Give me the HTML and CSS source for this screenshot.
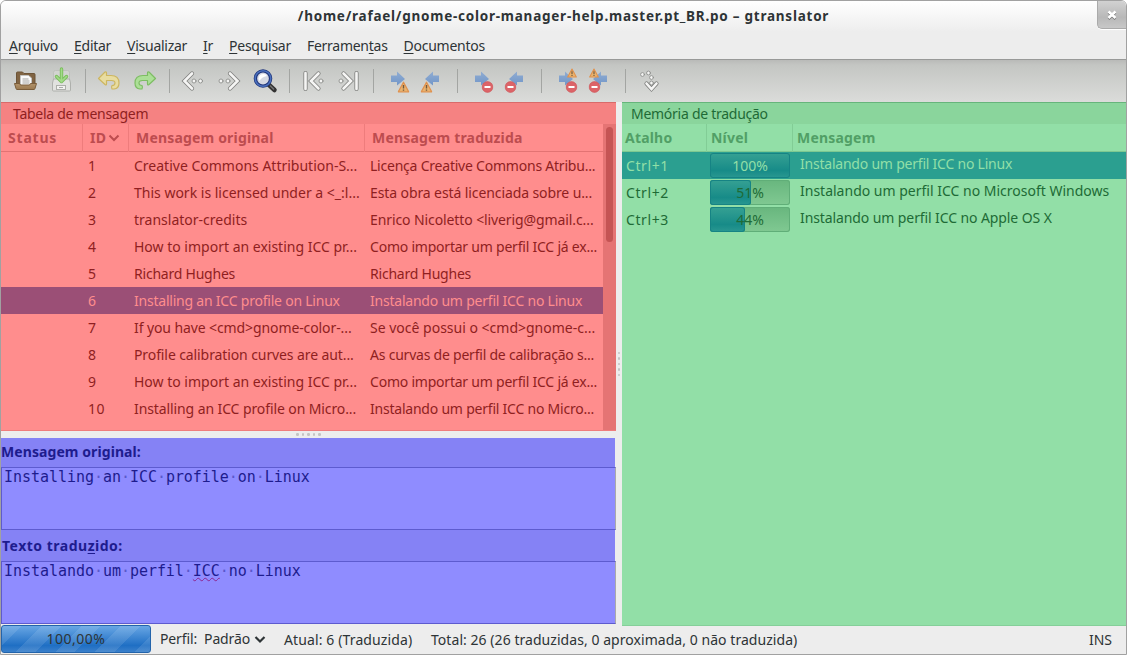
FILE: index.html
```html
<!DOCTYPE html>
<html lang="pt-BR">
<head>
<meta charset="utf-8">
<title>gtranslator</title>
<link rel="stylesheet" href="styles.css">
</head>
<body>
<svg class="defs" aria-hidden="true">
  <defs>
    <linearGradient id="blue" x1="0" y1="0" x2="0" y2="1"><stop offset="0" stop-color="#90acd2"/><stop offset="1" stop-color="#7196c8"/></linearGradient>
    <linearGradient id="wood" x1="0" y1="0" x2="0" y2="1"><stop offset="0" stop-color="#b2936a"/><stop offset="1" stop-color="#9a7950"/></linearGradient>
    <symbol id="arrow-r" viewBox="0 0 24 24"><path d="M3 6.500h6V2.500l8 7.500-8 6.500v-3.500H3z" fill="url(#blue)"/></symbol>
    <symbol id="arrow-l" viewBox="0 0 24 24"><path d="M21 6.500h-6V2.500l-8 7.500 8 6.500v-3.500h6z" fill="url(#blue)"/></symbol>
    <symbol id="warn" viewBox="0 0 12 12"><path d="M6 1.200L11.200 10.800H.8z" fill="#e9b36e" stroke="#e0914d" stroke-width="1.300" stroke-linejoin="round"/><path d="M6 4v3.500M6 8.500v1.200" stroke="#71583e" stroke-width="1.400"/></symbol>
    <symbol id="stop" viewBox="0 0 12 12"><circle cx="6" cy="6" r="5.400" fill="#dc6468" stroke="#cf5054" stroke-width=".6"/><path d="M3 6h6" stroke="#fff" stroke-width="2"/></symbol>
  </defs>
</svg>
<div class="window">
  <header class="titlebar">
    <h1>/home/rafael/gnome-color-manager-help.master.pt_BR.po – gtranslator</h1>
    <button class="close" aria-label="Fechar"><svg width="10" height="10" viewBox="0 0 10 10"><path d="M1.500 2.500l7 6.500M8.500 2.500l-7 6.500" stroke="#777" stroke-width="2.400"/><path d="M1.500 1.500l7 6.500M8.500 1.500l-7 6.500" stroke="#fff" stroke-width="2.500"/></svg></button>
  </header>
  <nav class="menubar">
    <span><u>A</u>rquivo</span><span><u>E</u>ditar</span><span><u>V</u>isualizar</span><span><u>I</u>r</span><span><u>P</u>esquisar</span><span>Ferramen<u>t</u>as</span><span><u>D</u>ocumentos</span>
  </nav>
  <div class="toolbar">
    <div class="group">
      <svg class="icon" viewBox="0 0 24 24"><path d="M3.500 15V4q0-1 1-1h5l1.500 1.500h10q1 0 1 1V15z" fill="#806443" stroke="#6c5437"/><path d="M7.500 16.500V6.500h8l3 2.500v7.500z" fill="#fafafa" stroke="#c4c4c2"/><path d="M9.500 10h6M9.500 12h7M9.500 14h7" stroke="#a5a5a3"/><path d="M1.500 14.500h5l1 1.500h9l1-1.500h6l-1.500 5q-.3 1-1 1H4q-.8 0-1-1z" fill="url(#wood)" stroke="#7a5d3a"/></svg>
      <svg class="icon" viewBox="0 0 24 24"><path d="M4.500 3.500q0-2 2-2h12q2 0 2 2v8H4.500z" fill="#d2d4d0" stroke="#bfc1bd"/><path d="M3.500 14l1-4h16l1 4v7q0 1-1 1h-16q-1 0-1-1z" fill="#e1e2df" stroke="#aeb0ac"/><rect x="7.500" y="16.500" width="9" height="4" fill="#f2f2f0" stroke="#adafab"/><path d="M10 18.500h4" stroke="#aaa"/><path d="M12.500 0v12M7.500 7.500l5 5 5-5" fill="none" stroke="#78bd5a" stroke-width="3.400" stroke-linecap="round" stroke-linejoin="round"/><path d="M12.500 0v11.500M7.500 7.500l5 5 5-5" fill="none" stroke="#a2db88" stroke-width="1.600" stroke-linecap="round"/></svg>
    </div>
    <div class="group">
      <svg class="icon" viewBox="0 0 24 24"><path d="M1.500 9.500L8 3q1.500-.5 1.500 1v2.500H14q8 0 8 7.500 0 5.500-5 6h-2q-1-1.700 0-3.500 3 0 3-2.500t-3.500-2.500H9.500V15q0 1.500-1.500.5z" fill="#e8dca0" stroke="#cdb660" stroke-width="1.200" stroke-linejoin="round"/></svg>
      <svg class="icon" viewBox="0 0 24 24"><path d="M22.500 9.500L16 3q-1.500-.5-1.500 1v2.500H10q-8 0-8 7.500 0 5.500 5 6h2q1-1.700 0-3.500-3 0-3-2.500t3.500-2.500h5V15q0 1.500 1.500.5z" fill="#acdf97" stroke="#7dbd63" stroke-width="1.200" stroke-linejoin="round"/></svg>
    </div>
    <div class="group">
      <svg class="icon" viewBox="0 0 24 24"><g class="nav"><path class="o" d="M11 4.500L3.500 12l7.500 7.500"/><path class="i" d="M11 4.500L3.500 12l7.500 7.500"/><circle cx="13" cy="12" r="2"/><circle cx="19.500" cy="12" r="2"/></g></svg>
      <svg class="icon" viewBox="0 0 24 24"><g class="nav"><path class="o" d="M13 4.500L20.500 12 13 19.500"/><path class="i" d="M13 4.500L20.500 12 13 19.500"/><circle cx="4" cy="12" r="2"/><circle cx="11" cy="12" r="2"/></g></svg>
      <svg class="icon" viewBox="0 0 24 24"><path d="M15 15l6.500 6" stroke="#333" stroke-width="4.500" stroke-linecap="round"/><path d="M17 16.500l4 4" stroke="#777" stroke-width="1.200"/><circle cx="10" cy="9.500" r="7.600" fill="#d5d9e3" stroke="#21367c" stroke-width="3.400"/><circle cx="10" cy="9.500" r="7.800" fill="none" stroke="#4a70bd" stroke-width="1.500"/><path d="M5.500 10q0-5 5-5 3 0 3.500 2-5.500 1-7.500 5z" fill="#fff"/></svg>
    </div>
    <div class="group">
      <svg class="icon" viewBox="0 0 24 24"><g class="nav"><path class="o" d="M4.500 4v16M17.500 4.500L10 12l7.500 7.500"/><path class="i" d="M4.500 4v16M17.500 4.500L10 12l7.500 7.500"/><circle cx="20" cy="12" r="2"/></g></svg>
      <svg class="icon" viewBox="0 0 24 24"><g class="nav"><path class="o" d="M19.500 4v16M6.500 4.500L14 12l-7.500 7.500"/><path class="i" d="M19.500 4v16M6.500 4.500L14 12l-7.500 7.500"/><circle cx="4" cy="12" r="2"/></g></svg>
    </div>
    <div class="group tight">
      <svg class="icon" viewBox="0 0 24 24"><use href="#arrow-r"/><use href="#warn" x="9.500" y="12" width="12" height="12"/></svg>
      <svg class="icon" viewBox="0 0 24 24"><use href="#arrow-l"/><use href="#warn" x="2.500" y="12" width="12" height="12"/></svg>
    </div>
    <div class="group tight">
      <svg class="icon" viewBox="0 0 24 24"><use href="#arrow-r"/><use href="#stop" x="9.500" y="12" width="12" height="12"/></svg>
      <svg class="icon" viewBox="0 0 24 24"><use href="#arrow-l"/><use href="#stop" x="2.500" y="12" width="12" height="12"/></svg>
    </div>
    <div class="group tight">
      <svg class="icon" viewBox="0 0 24 24"><use href="#arrow-r"/><use href="#warn" x="11" y="-1" width="10" height="10"/><use href="#stop" x="9.500" y="12" width="12" height="12"/></svg>
      <svg class="icon" viewBox="0 0 24 24"><use href="#arrow-l"/><use href="#warn" x="3" y="-1" width="10" height="10"/><use href="#stop" x="2.500" y="12" width="12" height="12"/></svg>
    </div>
    <div class="group">
      <svg class="icon" viewBox="0 0 24 24"><g class="nav"><path class="o" d="M9.500 14.500l5 5.500 5-5.500"/><path class="i" d="M9.500 14.500l5 5.500 5-5.500"/><circle cx="5.500" cy="5.500" r="1.900"/><circle cx="11.500" cy="4" r="1.900"/><circle cx="14.500" cy="8.500" r="1.900"/><circle cx="14.500" cy="14" r="1.900"/></g></svg>
    </div>
  </div>
  <main class="panes">
    <div class="left">
      <section class="table">
        <h2>Tabela de mensagem</h2>
        <div class="body">
          <div class="grid">
            <div class="row head"><span class="status">Status</span><span>ID <svg width="12" height="8" viewBox="0 0 12 8"><path d="M1.500 1.500L6 6l4.500-4.500" fill="none" stroke="#bd4c4f" stroke-width="2"/></svg></span><span>Mensagem original</span><span>Mensagem traduzida</span></div>
            <div class="row"><span></span><span>1</span><span>Creative Commons Attribution-S...</span><span class="narrow">Licença Creative Commons Atribu...</span></div>
            <div class="row"><span></span><span>2</span><span>This work is licensed under a &lt;_:l...</span><span class="snug">Esta obra está licenciada sobre u...</span></div>
            <div class="row"><span></span><span>3</span><span>translator-credits</span><span class="snug">Enrico Nicoletto &lt;liverig@gmail.c...</span></div>
            <div class="row"><span></span><span>4</span><span>How to import an existing ICC pr...</span><span class="narrow">Como importar um perfil ICC já ex...</span></div>
            <div class="row"><span></span><span>5</span><span class="narrow">Richard Hughes</span><span class="narrow">Richard Hughes</span></div>
            <div class="row selected"><span></span><span>6</span><span class="narrow">Installing an ICC profile on Linux</span><span class="narrow">Instalando um perfil ICC no Linux</span></div>
            <div class="row"><span></span><span>7</span><span class="snug">If you have &lt;cmd&gt;gnome-color-...</span><span>Se você possui o &lt;cmd&gt;gnome-c...</span></div>
            <div class="row"><span></span><span>8</span><span class="snug">Profile calibration curves are aut...</span><span class="narrow">As curvas de perfil de calibração s...</span></div>
            <div class="row"><span></span><span>9</span><span>How to import an existing ICC pr...</span><span class="narrow">Como importar um perfil ICC já ex...</span></div>
            <div class="row"><span></span><span class="wide">10</span><span class="snug">Installing an ICC profile on Micro...</span><span class="narrow">Instalando um perfil ICC no Micro...</span></div>
          </div>
          <div class="scrollbar"><div class="thumb"></div></div>
        </div>
      </section>
      <div class="handle"><i></i><i></i><i></i><i></i><i></i></div>
      <section class="editor">
        <h3>Mensagem original:</h3>
        <div class="entry">Installing<b>·</b>an<b>·</b>ICC<b>·</b>profile<b>·</b>on<b>·</b>Linux</div>
        <h3 class="second">Texto tradu<u>z</u>ido:</h3>
        <div class="entry">Instalando<b>·</b>um<b>·</b>perfil<b>·</b><span class="misspelt">ICC</span><b>·</b>no<b>·</b>Linux</div>
      </section>
    </div>
    <div class="handle vertical"><i></i><i></i><i></i><i></i><i></i></div>
    <section class="memory">
      <h2>Memória de tradução</h2>
      <div class="row head"><span>Atalho</span><span>Nível</span><span>Mensagem</span></div>
      <div class="row selected"><span class="wide">Ctrl+1</span><div class="meter"><div class="fill" style="width:100%"></div><em>100%</em></div><span class="narrow">Instalando um perfil ICC no Linux</span></div>
      <div class="row"><span class="wide">Ctrl+2</span><div class="meter"><div class="fill" style="width:51%"></div><em>51%</em></div><span>Instalando um perfil ICC no Microsoft Windows</span></div>
      <div class="row"><span class="wide">Ctrl+3</span><div class="meter"><div class="fill" style="width:44%"></div><em>44%</em></div><span class="snug">Instalando um perfil ICC no Apple OS X</span></div>
    </section>
  </main>
  <footer class="statusbar">
    <div class="progress">100,00%</div>
    <span class="profile">Perfil:&nbsp; Padrão <svg width="12" height="8" viewBox="0 0 12 8"><path d="M1.500 1L6 5.500 10.500 1" fill="none" stroke="#2e3436" stroke-width="2.200"/></svg></span>
    <span class="current">Atual: 6 (Traduzida)</span>
    <span class="total">Total: 26 (26 traduzidas, 0 aproximada, 0 não traduzida)</span>
    <span class="ins">INS</span>
  </footer>
</div>
</body>
</html>
```
FILE: styles.css
```css
* { box-sizing: border-box; }
body { margin: 0; background: #fff; }
.defs { position: absolute; width: 0; height: 0; }
h1, h2, h3 { margin: 0; font-weight: normal; }

.window {
  width: 1127px;
  height: 655px;
  border: 1px solid #a1a1a1;
  border-radius: 6px 6px 0 0;
  background: #ededed;
  color: #2e3436;
  font: 14px/20px "Noto Sans", "Open Sans", sans-serif;
  overflow: hidden;
  display: flex;
  flex-direction: column;
  white-space: nowrap;
}

.narrow { letter-spacing: -.22px; }
.snug { letter-spacing: -.1px; }
.wide { letter-spacing: .6px; }

.titlebar {
  height: 31px;
  background: linear-gradient(#fff, #ededed);
  display: flex;
  justify-content: center;
  position: relative;
}
.titlebar h1 { font-size: 13.500px; font-weight: bold; line-height: 31px; letter-spacing: .76px; }
.close {
  position: absolute;
  right: 0;
  top: 0;
  width: 29px;
  height: 28px;
  padding: 0;
  border: 1px solid #aaa;
  border-width: 0 0 1px 1px;
  border-radius: 0 0 0 5px;
  background: linear-gradient(#d2d2d2, #b8b8b8 60%, #c8c8c8);
  box-shadow: 0 1px #fff;
  display: grid;
  place-items: center;
}

.menubar { height: 27px; padding-left: 8px; display: flex; gap: 16px; line-height: 27px; letter-spacing: -.27px; }
u { text-decoration-thickness: 1px; text-underline-offset: 2px; }

.toolbar {
  height: 43px;
  border-top: 1px solid #989998;
  background: linear-gradient(#b9bab8, #c4c6c3 12%, #dbdcda);
  display: flex;
  align-items: center;
}
.group {
  height: 24px;
  padding: 0 12px 0 11px;
  display: flex;
  gap: 12px;
  border-left: 1px solid #a3a5a2;
}
.group:first-child { border-left: 0; padding-left: 12px; }
.tight { gap: 6px; padding: 0 15px 0 14px; }
.icon { width: 24px; height: 24px; overflow: visible; }
.nav { fill: none; stroke-linecap: round; }
.nav .o { stroke: #80817f; stroke-width: 4.200; }
.nav .i { stroke: #f5f5f4; stroke-width: 2.600; }
.nav circle { fill: #f5f5f4; stroke: #8d8e8c; stroke-width: .9; }

.panes { height: 524px; display: flex; }
.left { width: 615px; }
.row { display: grid; height: 27px; line-height: 28px; }
h2 { height: 22px; line-height: 22px; font-size: 14px; letter-spacing: -.27px; }
.head { font-weight: bold; }

.table { height: 329px; background: #ff8d8d; color: #8f1f21; border-bottom: 1px solid #ef7d7d; }
.table h2 { background: #f58282; border-top: 1px solid #d96a6a; padding-left: 12px; }
.body { display: flex; height: 306px; }
.grid { width: 602px; }
.table .row { grid-template-columns: 81px 46px 236px 1fr; }
.table .row span { padding-left: 6px; }
.table .head { height: 28px; border-bottom: 1px solid #e37373; color: #bd4c4f; letter-spacing: .18px; }
.table .head span { padding-left: 7px; border-left: 1px solid #ee7c7c; }
.table .head span:first-child { border-left: 0; }
.table .head .status { letter-spacing: .8px; }
.table .head svg { vertical-align: 1px; margin-left: -2px; }
.table .selected { background: #9b4f76; color: #ff8d8d; }
.scrollbar { width: 13px; background: #e57474; padding: 3px; }
.thumb { height: 115px; width: 7px; border-radius: 4px; background: #c55454; }

.handle { height: 7px; display: flex; justify-content: center; align-items: center; gap: 3px; }
.handle i { width: 2.500px; height: 2.500px; border-radius: 50%; background: #c4c4c4; }
.vertical { width: 6px; height: 524px; flex-direction: column; }

.editor { height: 186px; width: 614px; background: #8582f5; color: #1e1c8e; }
.editor h3 { height: 29px; font-size: 14px; font-weight: bold; line-height: 28px; letter-spacing: .08px; }
.editor h3.second { height: 31px; line-height: 32px; padding-left: 1px; letter-spacing: .5px; }
.entry {
  width: 615px;
  height: 63px;
  padding-left: 2px;
  border: 1px solid #5d5bcf;
  border-right-color: #aaa;
  background: #8f8cff;
  font: 15px/19px "DejaVu Sans Mono", monospace;
  letter-spacing: -.04px;
}
.entry b { font-weight: normal; color: #5a58cc; }
.misspelt { text-decoration: underline wavy #8d2590 1px; text-underline-offset: 1px; }

.memory { width: 504px; background: #92dfa7; color: #1e6b36; border-bottom: 1px solid #85cf99; }
.memory h2 { background: #8ad59c; border-top: 1px solid #66b57b; padding-left: 9px; }
.memory .row { grid-template-columns: 84px 90px 1fr; padding-left: 4px; line-height: 27px; }
.memory .row > span:last-child { line-height: 23px; }
.memory .head { height: 28px; grid-template-columns: 81px 86px 1fr; padding-left: 3px; border-bottom: 1px solid #7dc891; color: #519f66; letter-spacing: .2px; }
.memory .head span, .memory .head > span:last-child { line-height: 28px; }
.memory .head span + span { padding-left: 4px; border-left: 1px solid #82cd96; }
.memory .selected { background: #2b9f90; color: #92dfa7; }
.meter {
  position: relative;
  width: 80px;
  height: 25px;
  margin-top: 1px;
  border-radius: 3px;
  box-shadow: inset 0 0 0 1px #60ae78;
  background: linear-gradient(#68b67e, #80c992);
}
.fill {
  height: 25px;
  border-radius: 3px;
  box-shadow: inset 0 0 0 1px #168384;
  background: linear-gradient(#36a193, #178b88 70%, #2a9891);
}
.meter em { position: absolute; inset: 0; text-align: center; line-height: 25px; font-style: normal; }

.statusbar { height: 28px; display: flex; line-height: 27px; }
.progress {
  width: 150px;
  height: 28px;
  margin-top: -1px;
  border: 1px solid #2364ab;
  border-radius: 3px;
  background:
    repeating-linear-gradient(135deg, rgba(255,255,255,.1) 0 14px, transparent 14px 28px),
    linear-gradient(#68a6e4, #1f6fc4 75%, #3a80cb);
  text-align: center;
  line-height: 26px;
  letter-spacing: .5px;
}
.profile { margin-left: 9px; width: 124px; line-height: 25px; letter-spacing: -.13px; }
.current { width: 147px; letter-spacing: .12px; }
.total { letter-spacing: .05px; }
.ins { margin-left: auto; padding-right: 14px; }
```
